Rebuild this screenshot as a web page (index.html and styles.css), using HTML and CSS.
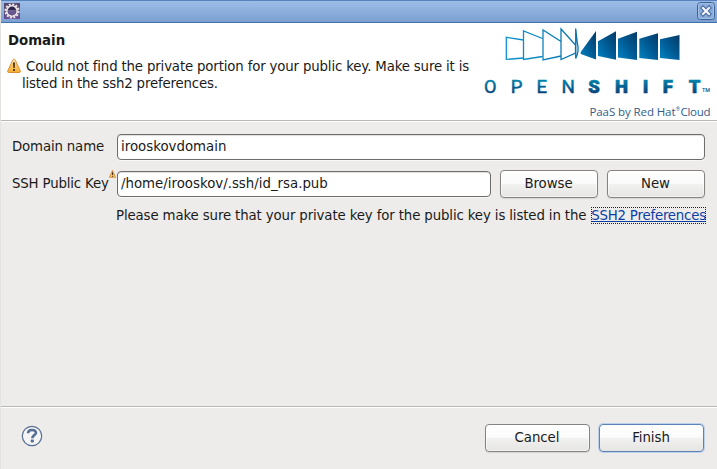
FILE: index.html
```html
<!DOCTYPE html>
<html lang="en">
<head>
<meta charset="utf-8">
<title>Domain</title>
<link rel="stylesheet" href="styles.css">
</head>
<body>
<div class="window">
  <div class="titlebar">
    <svg class="app-icon" width="16" height="16" viewBox="0 0 16 16">
      <rect width="16" height="16" fill="#665091"/>
      <path d="M0 0h16v3L0 13z" fill="#4a4257" opacity=".55"/>
      <circle cx="8" cy="8" r="6.600" fill="none" stroke="#eee9e6" stroke-width="1.900" stroke-dasharray="2 1.456"/>
      <circle cx="8" cy="8" r="5.200" fill="#302550" stroke="#eee9e6" stroke-width="1.600"/>
      <path d="M4 8h8a4 4 0 0 1-8 0z" fill="#695894"/>
      <path d="M4 7.500h8" stroke="#81739b" stroke-width=".8"/>
    </svg>
    <svg class="close" width="18" height="18" viewBox="0 0 18 18">
      <rect x=".5" y=".5" width="17" height="17" rx="3" fill="#8aacd9" stroke="#3e6296"/>
      <rect x="1.500" y="1.500" width="15" height="15" rx="2" fill="none" stroke="#a2bfe5"/>
      <path d="M6 6l6 6M12 6l-6 6" stroke="#41669b" stroke-width="4.200" stroke-linecap="square"/>
      <path d="M6 6l6 6M12 6l-6 6" stroke="#f4f7fb" stroke-width="2.200" stroke-linecap="square"/>
    </svg>
  </div>
  <header class="header">
    <div class="heading">
      <h1 class="title">Domain</h1>
      <div class="message">
        <svg class="warning" width="14" height="16" viewBox="0 0 14 16">
          <defs><linearGradient id="warn" x2="0" y2="1"><stop offset="0" stop-color="#fff0c8"/><stop offset=".5" stop-color="#fbc55f"/><stop offset="1" stop-color="#f5ad35"/></linearGradient></defs>
          <path d="M7 1.200Q7.800 1.200 8.300 2.200L13.200 12.800Q13.800 14.500 12.300 14.500H1.700Q.2 14.500.8 12.800L5.700 2.200Q6.200 1.200 7 1.200z" fill="url(#warn)" stroke="#d98e35"/>
          <path d="M6 4.500h2L7.700 10H6.300z" fill="#49331c"/><rect x="6.100" y="11" width="1.800" height="2" fill="#49331c"/>
        </svg>
        <p class="message-text"><span class="l1">Could not find the private portion for your public key. Make sure it is</span><br><span class="l2">listed in the ssh2 preferences.</span></p>
      </div>
    </div>
    <svg class="logo" width="240" height="97" viewBox="477 23 240 97">
      <defs>
        <linearGradient id="fill" x1="0" y1="1" x2="1" y2="0"><stop offset="0" stop-color="#0084c5"/><stop offset=".5" stop-color="#005b94"/><stop offset="1" stop-color="#063a66"/></linearGradient>
        <linearGradient id="word" gradientUnits="userSpaceOnUse" x1="0" y1="79" x2="0" y2="94"><stop offset="0" stop-color="#0087ae"/><stop offset="1" stop-color="#063f76"/></linearGradient>
        <linearGradient id="line" gradientUnits="userSpaceOnUse" x1="506" y1="0" x2="578" y2="0"><stop offset="0" stop-color="#0c93ce"/><stop offset="1" stop-color="#0872ae"/></linearGradient>
      </defs>
      <g fill="none" stroke="url(#line)" stroke-width="1.300">
        <path d="M523.500 40L506.300 37.300V59.400L523.500 58"/>
        <path d="M542.500 38.500L523.500 31V59.500L542.500 56.500"/>
        <path d="M561 41.500L543 30V59.900L561 56"/>
        <path d="M575.500 45L561 29V59.500L575.500 53z"/>
        <path d="M575.700 28.500V58.500Q579.500 51 577.300 43z"/>
      </g>
      <g fill="url(#fill)">
        <path d="M580.700 52L596 31V59.500L580.700 54z"/>
        <path d="M598 41.300L616 31.200V59.800L598 55.900z"/>
        <path d="M618 38.700L637 31.700V59.900L618 57.500z"/>
        <path d="M639.300 38.700L658 33.200V59.900L639.300 57.900z"/>
        <path d="M660 39.200L679.500 35V59.900L660 58.100z"/>
      </g>
      <g class="wordmark">
        <text class="thin" x="484" y="93" textLength="12.500" lengthAdjust="spacingAndGlyphs">O</text>
        <text class="thin" x="510.700" y="93">P</text>
        <text class="thin" x="536.500" y="93">E</text>
        <text class="thin" x="561.600" y="93" textLength="13.400" lengthAdjust="spacingAndGlyphs">N</text>
        <text class="bold" x="588.300" y="93">S</text>
        <text class="bold" x="615" y="93">H</text>
        <text class="bold" x="642.700" y="93">I</text>
        <text class="bold" x="662.700" y="93">F</text>
        <text class="bold" x="688.700" y="93">T</text>
        <text class="tm" x="702" y="92" textLength="8" lengthAdjust="spacingAndGlyphs">TM</text>
      </g>
      <text class="tagline" x="589.500" y="115.500" textLength="86" lengthAdjust="spacing">PaaS by Red Hat</text>
      <text class="reg" x="676" y="111">®</text>
      <text class="tagline" x="680.500" y="115.500" textLength="30" lengthAdjust="spacing">Cloud</text>
    </svg>
  </header>
  <main class="form">
    <div class="row row-domain">
      <label class="label" for="domain">Domain name</label>
      <input class="field" id="domain" value="irooskovdomain">
    </div>
    <div class="row row-key">
      <label class="label" for="key">SSH Public Key
        <svg class="decorator" width="7" height="8" viewBox="0 0 7 8"><path d="M3.500.600L6.500 7.300H.500z" fill="#fbc568" stroke="#d8973e" stroke-width="1.100" stroke-linejoin="round"/><path d="M3.500 2.300v2.700M3.500 5.800v1" stroke="#49331c"/></svg>
      </label>
      <input class="field" id="key" value="/home/irooskov/.ssh/id_rsa.pub">
      <button class="button browse">Browse</button>
      <button class="button">New</button>
    </div>
    <p class="hint"><span class="hint-text">Please make sure that your private key for the public key is listed in the</span><a class="link" href="#">SSH2 Preferences</a></p>
  </main>
  <footer class="footer">
    <svg class="help" width="22" height="22" viewBox="0 0 22 22"><circle cx="11" cy="11" r="9.700" fill="#f5f5f5" stroke="#566f93" stroke-width="1.200"/><path d="M7 8.200C7 4 15 3.900 15 7.700C15 10.300 11.300 10 11.300 13.200" fill="none" stroke="#566f98" stroke-width="2.600"/><rect x="9.700" y="14.600" width="3.200" height="3" rx="1" fill="#566f98"/></svg>
    <div class="actions">
      <button class="button">Cancel</button>
      <button class="button primary">Finish</button>
    </div>
  </footer>
</div>
</body>
</html>
```
FILE: styles.css
```css
* { box-sizing: border-box; }
body {
  margin: 0;
  background: #edeceb;
  color: #1a1a1a;
  font: 13.33px/17px "DejaVu Sans", sans-serif;
}
.window { height: 469px; display: flex; flex-direction: column; overflow: hidden; border-left: 1px solid #e3e3e2; }
.titlebar {
  height: 23px;
  flex: none;
  margin-left: -1px;
  padding: 1px 2px 0 4px;
  display: flex;
  align-items: flex-start;
  justify-content: space-between;
  background: linear-gradient(#9dbde8, #7b9fd0);
  border-top: 1px solid #5782bd;
  border-bottom: 1px solid #4371ac;
}
.app-icon { margin-top: 1px; }
.header {
  height: 99px;
  flex: none;
  display: flex;
  justify-content: space-between;
  background: #fff;
  border-bottom: 1px solid #fff;
  box-shadow: inset 0 -1px #b9b8b6;
}
.heading { width: 476px; flex: none; padding: 9px 0 0 7px; }
.title { margin: 0; font-size: 13.33px; line-height: 17px; }
.message { display: flex; margin: 9px 0 0 -1px; }
.message-text { margin: 0; white-space: nowrap; letter-spacing: -0.16px; }
.l1 { padding-left: 5px; }
.l2 { padding-left: 1px; letter-spacing: -0.18px; }
.logo { flex: none; }
.wordmark { fill: url(#word); font-family: Roboto, sans-serif; font-size: 18.5px; }
.thin { stroke: url(#word); stroke-width: .5px; }
.bold { font-weight: 900; stroke: url(#word); stroke-width: .6px; }
.tm { font-size: 6px; font-weight: 500; }
.tagline { font: 500 11.5px "Open Sans", sans-serif; fill: #315d8b; }
.reg { font: 5px Roboto, sans-serif; fill: #315d8b; }
.form { flex: 1; padding: 12px 12px 0 11px; }
.row { display: flex; align-items: center; }
.row-domain { height: 26px; }
.row-key { height: 28px; margin-top: 10px; }
.label { width: 105px; flex: none; position: relative; padding-bottom: 2px; white-space: nowrap; letter-spacing: -0.16px; }
.decorator { position: absolute; left: 97px; top: -5px; }
.field {
  width: 0;
  flex: 1;
  height: 26px;
  padding: 0 3px 1px;
  border: 1px solid #6e6d6b;
  border-radius: 4px;
  background: #fff;
  color: inherit;
  font: inherit;
  box-shadow: inset 0 1px 1px #ddd, 0 1px #f8f8f8;
  outline: none;
}
.button {
  width: 98px;
  height: 28px;
  margin-left: 9px;
  padding: 0 1px 1px 0;
  border: 1px solid #858481;
  border-radius: 4px;
  background: linear-gradient(#fff, #fafafa 50%, #f1f1f0 51%, #e6e5e4);
  color: #1a1a1a;
  font: inherit;
  letter-spacing: -0.05px;
  box-shadow: inset 0 0 0 1px #fff8, 0 1px 1px #d6d5d4;
}
.hint { display: flex; margin: 9px -1px 0 104px; white-space: nowrap; justify-content: space-between; letter-spacing: -0.13px; }
.link { color: #0a3fa6; outline: 1px dotted #222; outline-offset: -1px; text-decoration: underline; letter-spacing: -0.2px; }
.footer {
  height: 63px;
  flex: none;
  display: flex;
  justify-content: space-between;
  align-items: flex-start;
  padding: 17px 13px 0 20px;
  border-top: 1px solid #bab9b7;
  box-shadow: inset 0 1px #fff;
}
.help { margin-top: 1px; }
.actions { display: flex; }
.actions .button { width: 105px; }
.actions .primary { border-color: #5c83b5; box-shadow: 0 0 0 1px #bdd0e9; }
```
